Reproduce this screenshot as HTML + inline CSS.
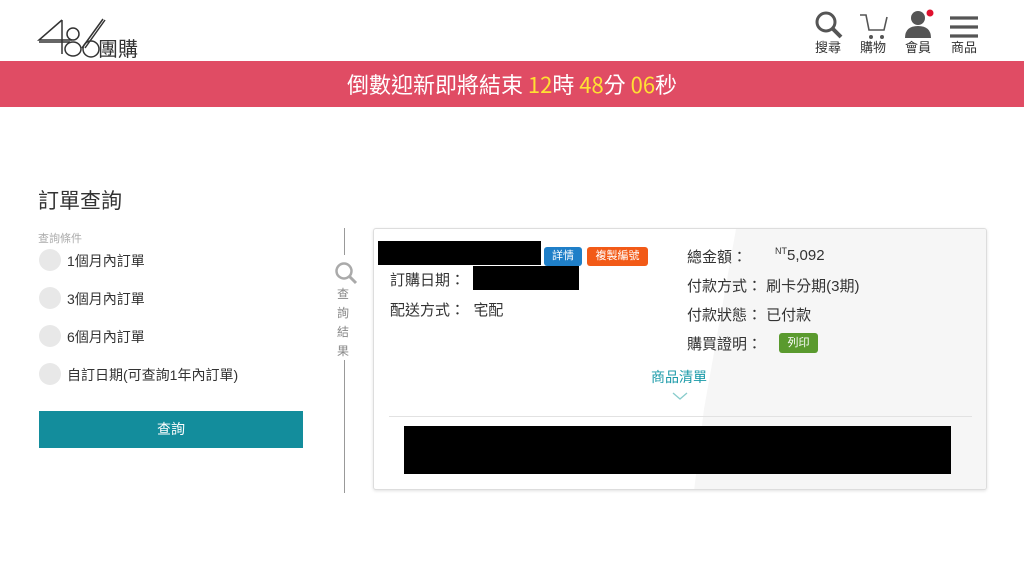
<!DOCTYPE html>
<html><head><meta charset="utf-8"><style>
*{margin:0;padding:0;box-sizing:border-box}
body{width:1024px;height:565px;background:#fff;font-family:"Liberation Sans","Noto Sans CJK TC",sans-serif;color:#333;position:relative;overflow:hidden}
.a{position:absolute}
.banner{left:0;top:61px;width:1024px;height:46px;background:#e04c64;color:#fff;font-size:22px;text-align:center;line-height:46px;font-family:"Noto Sans CJK TC",sans-serif}
.banner b{font-weight:normal;color:#ffe033}
.nav{font-size:13px;color:#333;text-align:center;width:40px;font-family:"Noto Sans CJK TC",sans-serif}
.radio{width:22px;height:22px;border-radius:50%;background:#e8e8e8}
.opt{font-size:14px;color:#333}
.lab{font-size:15px;color:#333}
.badge{font-size:11px;color:#fff;border-radius:3px;text-align:center;line-height:19px;height:19px}
</style></head><body>
<!-- logo -->
<svg class="a" style="left:36px;top:14px" width="110" height="46" viewBox="0 0 110 46">
<g fill="none" stroke="#333" stroke-width="1.5">
<path d="M26 6 L3 26 L36 26 M3 28 L34 28"/>
<path d="M26 6 L26 40"/>
<ellipse cx="37" cy="35" rx="8" ry="7"/><ellipse cx="37" cy="20" rx="6" ry="6"/>
<circle cx="55" cy="35" r="8"/><path d="M46 34 L67 5 M49 34 L69 6"/>
</g>
<text x="62" y="42" font-size="20" fill="#333" font-family="Noto Sans CJK TC,sans-serif">團購</text>
</svg>
<!-- nav icons -->
<svg class="a" style="left:814px;top:10px" width="30" height="30" viewBox="0 0 30 30"><circle cx="12" cy="12" r="9" fill="none" stroke="#555" stroke-width="3"/><path d="M18 18 L27 27" stroke="#555" stroke-width="4"/></svg>
<div class="a nav" style="left:808px;top:37px">搜尋</div>
<svg class="a" style="left:858px;top:12px" width="32" height="28" viewBox="0 0 32 28"><path d="M2 3 L8 3 L11 18 L26 18 L29 5" fill="none" stroke="#555" stroke-width="1.6"/><circle cx="13" cy="25" r="2" fill="#555"/><circle cx="24" cy="25" r="2" fill="#555"/></svg>
<div class="a nav" style="left:853px;top:37px">購物</div>
<svg class="a" style="left:903px;top:9px" width="34" height="30" viewBox="0 0 34 30"><circle cx="15" cy="9" r="7" fill="#555"/><path d="M2 29 Q2 17 15 17 Q28 17 28 29 Z" fill="#555"/><circle cx="27" cy="4" r="3.5" fill="#e0102e"/></svg>
<div class="a nav" style="left:898px;top:37px">會員</div>
<svg class="a" style="left:949px;top:15px" width="30" height="24" viewBox="0 0 30 24"><path d="M1 3H29M1 12H29M1 21H29" stroke="#555" stroke-width="3.2"/></svg>
<div class="a nav" style="left:944px;top:37px">商品</div>
<div class="a banner">倒數迎新即將結束 <b>12</b>時 <b>48</b>分 <b>06</b>秒</div>
<!-- left -->
<div class="a" style="left:38px;top:185px;font-size:21px;color:#333;font-family:'Noto Sans CJK TC',sans-serif">訂單查詢</div>
<div class="a" style="left:38px;top:230px;font-size:11px;color:#aaa">查詢條件</div>
<div class="a radio" style="left:39px;top:249px"></div><div class="a opt" style="left:67px;top:251px">1個月內訂單</div>
<div class="a radio" style="left:39px;top:287px"></div><div class="a opt" style="left:67px;top:289px">3個月內訂單</div>
<div class="a radio" style="left:39px;top:325px"></div><div class="a opt" style="left:67px;top:327px">6個月內訂單</div>
<div class="a radio" style="left:39px;top:363px"></div><div class="a opt" style="left:67px;top:365px">自訂日期(可查詢1年內訂單)</div>
<div class="a" style="left:39px;top:411px;width:264px;height:37px;background:#138d9c;color:#fff;font-size:14px;text-align:center;line-height:37px">查詢</div>
<!-- divider -->
<div class="a" style="left:344px;top:228px;width:1px;height:27px;background:#999"></div>
<div class="a" style="left:344px;top:360px;width:1px;height:133px;background:#999"></div>
<svg class="a" style="left:334px;top:261px" width="24" height="24" viewBox="0 0 24 24"><circle cx="10" cy="10" r="7.5" fill="none" stroke="#aaa" stroke-width="2.5"/><path d="M15 15 L22 22" stroke="#aaa" stroke-width="3"/></svg>
<div class="a" style="left:337px;top:285px;width:14px;font-size:12px;line-height:19px;color:#888">查詢結果</div>
<!-- card -->
<div class="a" style="left:373px;top:228px;width:614px;height:262px;border:1px solid #ddd;border-radius:3px;background:#fff;box-shadow:0 1px 3px rgba(0,0,0,.12);overflow:hidden">
<div class="a" style="left:0;top:0;width:614px;height:262px;background:#f6f6f6;clip-path:polygon(362px 0,614px 0,614px 262px,320px 262px,330px 180px)"></div>
</div>
<div class="a" style="left:378px;top:241px;width:163px;height:24px;background:#000"></div>
<div class="a badge" style="left:544px;top:247px;width:38px;background:#1f7fc8">詳情</div>
<div class="a badge" style="left:587px;top:247px;width:61px;background:#f25a17">複製編號</div>
<div class="a lab" style="left:390px;top:269px">訂購日期：</div>
<div class="a" style="left:473px;top:266px;width:106px;height:24px;background:#000"></div>
<div class="a lab" style="left:390px;top:299px">配送方式：&nbsp;&nbsp;宅配</div>
<div class="a lab" style="left:687px;top:246px">總金額：</div>
<div class="a lab" style="left:775px;top:246px"><sup style="font-size:9px">NT</sup>5,092</div>
<div class="a lab" style="left:687px;top:275px">付款方式：&nbsp;刷卡分期(3期)</div>
<div class="a lab" style="left:687px;top:304px">付款狀態：&nbsp;已付款</div>
<div class="a lab" style="left:687px;top:333px">購買證明：</div>
<div class="a badge" style="left:779px;top:333px;width:39px;height:20px;line-height:20px;background:#5a9a2e">列印</div>
<div class="a" style="left:651px;top:367px;font-size:14px;color:#1a9aa8">商品清單</div>
<svg class="a" style="left:672px;top:391px" width="16" height="10" viewBox="0 0 16 10"><path d="M1 2 L8 8 L15 2" fill="none" stroke="#8cc" stroke-width="1.3"/></svg>
<div class="a" style="left:389px;top:416px;width:583px;height:1px;background:#e2e2e2"></div>
<div class="a" style="left:404px;top:426px;width:547px;height:48px;background:#000"></div>
</body></html>
